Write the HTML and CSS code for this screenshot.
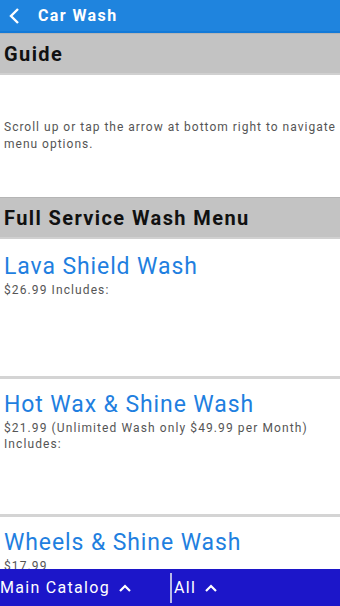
FILE: index.html
```html
<!DOCTYPE html>
<html>
<head>
<meta charset="utf-8">
<link rel="stylesheet" href="styles.css">
</head>
<body>
<div class="app">
  <header class="topbar">
    <svg class="back" width="12" height="18" viewBox="0 0 12 18"><path d="M10 2 L3 9 L10 16" fill="none" stroke="#fff" stroke-width="2.4"/></svg>
    <span class="title">Car Wash</span>
  </header>
  <main class="content">
    <div class="section">Guide</div>
    <p class="guide">Scroll up or tap the arrow at bottom right to navigate menu options.</p>
    <div class="section">Full Service Wash Menu</div>
    <div class="items">
      <div class="item">
        <div class="name">Lava Shield Wash</div>
        <div class="desc">$26.99 Includes:</div>
      </div>
      <div class="item">
        <div class="name">Hot Wax &amp; Shine Wash</div>
        <div class="desc">$21.99 (Unlimited Wash only $49.99 per Month)<br>Includes:</div>
      </div>
      <div class="item">
        <div class="name">Wheels &amp; Shine Wash</div>
        <div class="desc">$17.99</div>
      </div>
    </div>
  </main>
  <footer class="bottombar">
    <div class="nav left">Main Catalog
      <svg width="14" height="10" viewBox="0 0 14 10"><path d="M2 8 L7 3 L12 8" fill="none" stroke="#fff" stroke-width="2.2"/></svg>
    </div>
    <div class="nav right">All
      <svg width="14" height="10" viewBox="0 0 14 10"><path d="M2 8 L7 3 L12 8" fill="none" stroke="#fff" stroke-width="2.2"/></svg>
    </div>
  </footer>
</div>
</body>
</html>
```
FILE: styles.css
```css
html, body {
  margin: 0;
  padding: 0;
  background: #fff;
}
body {
  font-family: Roboto, "Liberation Sans", sans-serif;
}
.app {
  width: 340px;
  height: 606px;
  display: flex;
  flex-direction: column;
  overflow: hidden;
}
.topbar {
  height: 31px;
  background: #1f84de;
  border-bottom: 2px solid #137ad8;
  display: flex;
  align-items: center;
  padding-left: 8px;
  gap: 18px;
  flex: none;
}
.back {
  display: block;
}
.title {
  color: #fff;
  font-weight: bold;
  font-size: 16px;
  letter-spacing: 1.4px;
}
.content {
  flex: 1;
  overflow: hidden;
}
.section {
  background: #c3c3c3;
  border-top: 1px solid #b5b5b5;
  border-bottom: 2px solid #d0d0d0;
  height: 39px;
  line-height: 40px;
  padding-left: 4px;
  font-size: 20px;
  font-weight: bold;
  color: #111;
  letter-spacing: 1.4px;
}
.guide {
  margin: 0;
  padding: 44px 2px 44px 4px;
  font-size: 12px;
  line-height: 17px;
  color: #555;
  letter-spacing: 1px;
}
.items {
  padding-top: 2px;
}
.item {
  height: 135px;
  border-bottom: 3px solid #d4d4d4;
  padding-left: 4px;
}
.name {
  color: #1f7fe0;
  font-size: 23px;
  line-height: 26px;
  padding-top: 13px;
  letter-spacing: 0.9px;
}
.desc {
  color: #555;
  font-size: 12px;
  line-height: 16px;
  padding-top: 2px;
  letter-spacing: 1.1px;
}
.bottombar {
  height: 37px;
  background: #1c16c9;
  display: flex;
  align-items: center;
  flex: none;
}
.nav {
  color: #fff;
  font-size: 16px;
  display: flex;
  align-items: center;
  gap: 8px;
  letter-spacing: 1.3px;
}
.left {
  width: 170px;
}
.right {
  border-left: 2px solid #b8b8e8;
  padding-left: 2px;
  height: 30px;
}
```
